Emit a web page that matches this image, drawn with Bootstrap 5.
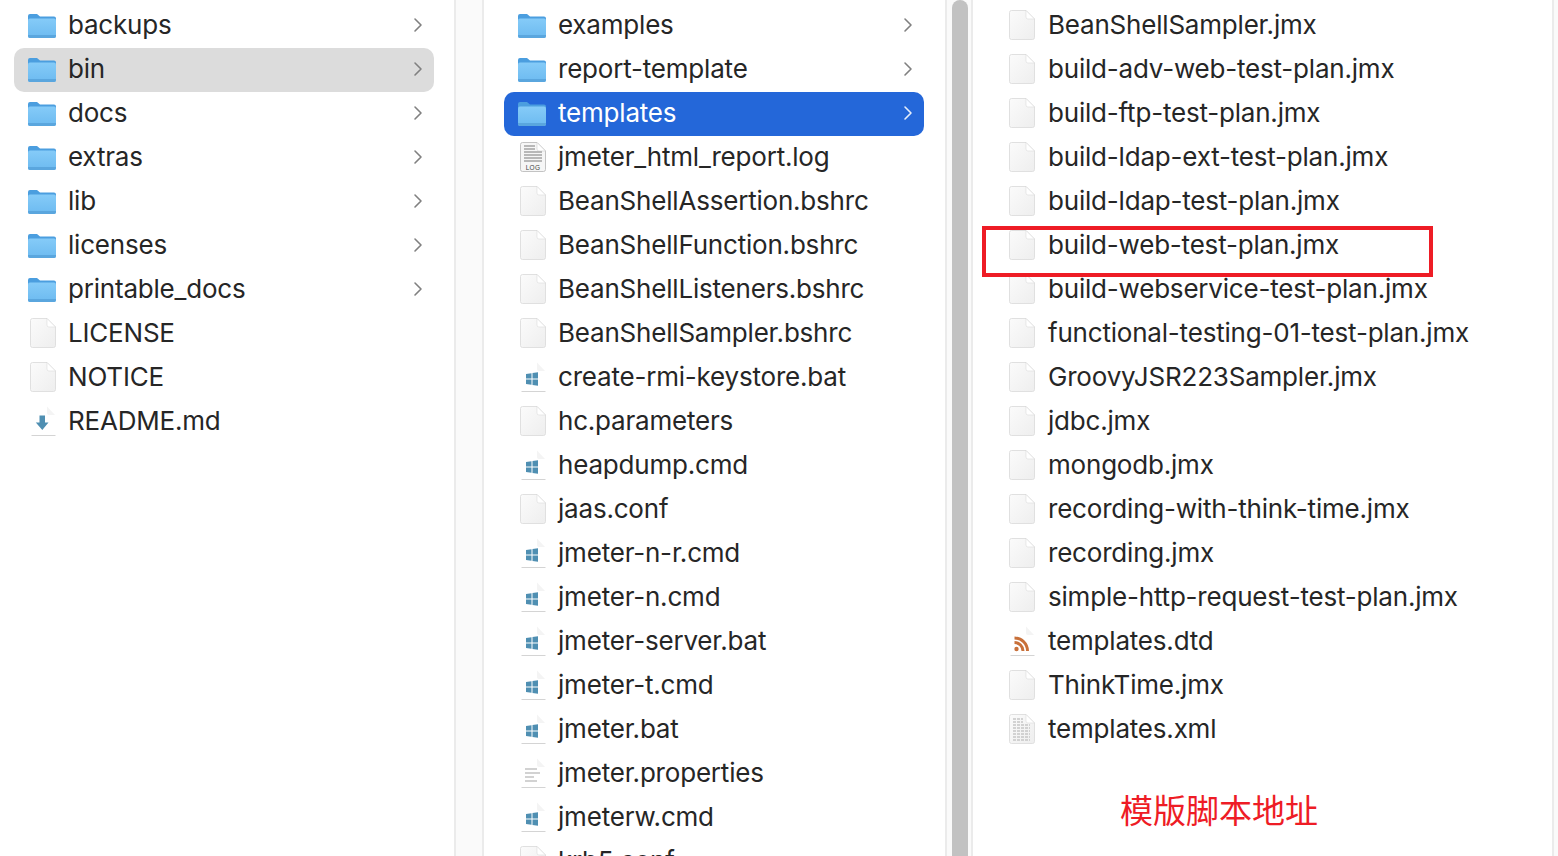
<!DOCTYPE html>
<html lang="zh-CN">
<head>
    <meta charset="UTF-8">
    <meta name="viewport" content="width=device-width, initial-scale=1.0">
    <title>JMeter templates</title>
    <link href="https://cdn.jsdelivr.net/npm/bootstrap@5.3.0/dist/css/bootstrap.min.css" rel="stylesheet">
    <style>
        body {
            background-color: #fff;
            font-family: "Inter", "Liberation Sans", sans-serif;
            font-size: 26px;
            color: #262626;
            height: 856px;
            overflow: hidden;
        }
        .finder { height: 856px; }
        .pane { padding: 4px 21px 0 20px; overflow: hidden; flex: none; }
        .pane-one { width: 454px; padding-left: 14px; padding-right: 20px; }
        .pane-two { width: 461px; }
        .pane-three { width: 579px; }
        .pane-three .file-icon { margin-right: 13px; }
        .gutter { flex: none; background: #fafafa; border-left: 2px solid #ebebeb; border-right: 2px solid #ebebeb; }
        .gutter-plain { width: 30px; }
        .gutter-scroll { width: 28px; padding: 0 3px 0 5px; }
        .gutter-end { width: 6px; border-right: 0; }
        .scroll-thumb { height: 100%; background: #c2c2c2; border-radius: 8px 8px 0 0; }
        .file-row { height: 44px; border-radius: 10px; padding: 0 11px 2px 16px; white-space: nowrap; line-height: 42px; letter-spacing: -.2px; }
        .file-row.is-gray { background: #dcdcdc; }
        .file-row.is-blue { background: #2467d9; color: #fff; }
        .file-icon { width: 26px; height: 30px; flex: none; margin-right: 12px; }
        .folder-icon { width: 30px; height: 28px; flex: none; margin-right: 11px; margin-left: -3px; }
        .chevron { width: 10px; height: 16px; flex: none; margin-left: auto; fill: none; stroke: #808080; stroke-width: 1.6; stroke-linecap: round; stroke-linejoin: round; }
        .is-blue .chevron { stroke: #e6eefb; }
        .hit-box { position: absolute; left: 982px; top: 226px; width: 451px; height: 51px; border: 4px solid #ee1c25; }
        .hit-note { position: absolute; left: 1120px; top: 787px; font-family: "Noto Sans CJK SC", sans-serif; font-size: 33px; line-height: 44px; font-weight: 400; color: #ee1c25; }
        .sprite { position: absolute; width: 0; height: 0; }
    </style>
</head>
<body>
    <svg class="sprite" aria-hidden="true">
        <defs>
            <linearGradient id="folderFill" x1="0" y1="0" x2="0" y2="1">
                <stop offset="0" stop-color="#85cbf8"/>
                <stop offset="1" stop-color="#6cbaf0"/>
            </linearGradient>
            <linearGradient id="pageFill" x1="0" y1="0" x2="1" y2="1">
                <stop offset="0" stop-color="#fbfbfb"/>
                <stop offset="1" stop-color="#eeeeee"/>
            </linearGradient>
            <symbol id="folder" viewBox="0 0 30 28">
                <path d="M1 5a2 2 0 0 1 2-2h7l3 2.500h14a2 2 0 0 1 2 2V12H1z" fill="#4b9edf"/>
                <rect x="1" y="7.500" width="28" height="19.500" rx="2" fill="url(#folderFill)"/>
                <path d="M1 24h28v1a2 2 0 0 1-2 2H3a2 2 0 0 1-2-2z" fill="#5aa6de"/>
            </symbol>
            <symbol id="page" viewBox="0 0 26 30">
                <path d="M2.500 .5h14.500l8.500 8.500v18.500a2 2 0 0 1-2 2h-21a2 2 0 0 1-2-2v-25a2 2 0 0 1 2-2z" fill="url(#pageFill)" stroke="#dcdcdc" stroke-width=".9"/>
                <path d="M17 .5v6.500a2 2 0 0 0 2 2h6.500z" fill="#fff" stroke="#dcdcdc" stroke-width=".6"/>
            </symbol>
            <symbol id="sheet" viewBox="0 0 26 30">
                <path d="M2 .5h15l8 8.500v20H2z" fill="#fff"/>
                <path d="M17 .5v6.500a2 2 0 0 0 2 2h6z" fill="#f4f4f4"/>
                <path d="M1.500 29.500h24" stroke="#d4d4d4" stroke-width="1"/>
            </symbol>
            <symbol id="win" viewBox="0 0 26 30">
                <use href="#sheet"/>
                <path d="M6 12l5.500-.8V16.500H6zM12.500 11l5.500-.8v6.300h-5.500zM6 17.500h5.500v5.300L6 22zM12.500 17.500H18v6.300l-5.500-.8z" fill="#4f8fb2"/>
            </symbol>
            <symbol id="down" viewBox="0 0 26 30">
                <use href="#sheet"/>
                <path d="M9.500 9.500H15v7h3.500l-6.200 7.500-6.500-7.500h3.700z" fill="#4f8fb2"/>
            </symbol>
            <symbol id="rss" viewBox="0 0 26 30">
                <use href="#sheet"/>
                <circle cx="7.500" cy="23" r="2.200" fill="#c8703a"/>
                <path d="M5.500 16.500a8.500 8.500 0 0 1 8.500 8.500M5.500 12a13 13 0 0 1 13 13" fill="none" stroke="#c8703a" stroke-width="3"/>
            </symbol>
            <symbol id="props" viewBox="0 0 26 30">
                <use href="#sheet"/>
                <path d="M5 11h12M5 15h15M5 19h9M5 23h12" stroke="#c4c4c4" stroke-width="1.500"/>
            </symbol>
            <symbol id="xml" viewBox="0 0 26 30">
                <use href="#page"/>
                <path d="M4 5h10M4 8h10M4 11h17M4 14h17M4 17h17M4 20h17M4 23h17M4 26h17" stroke="#c6c6c6" stroke-width="1.300" stroke-dasharray="3 1"/>
            </symbol>
            <symbol id="log" viewBox="0 0 26 30">
                <path d="M2.500 .5h14.500l8.500 8.500v18.500a2 2 0 0 1-2 2h-21a2 2 0 0 1-2-2v-25a2 2 0 0 1 2-2z" fill="#f6f6f6" stroke="#bcbcbc" stroke-width=".9"/>
                <path d="M17 .5v6.500a2 2 0 0 0 2 2h6.500z" fill="#fff" stroke="#cfcfcf" stroke-width=".6"/>
                <path d="M4 4h11M4 7h11M4 10h18M4 13h18M4 16h18M4 19h18" stroke="#b8b8b8" stroke-width="2"/>
                <text x="13" y="27.500" text-anchor="middle" font-family="Liberation Sans, sans-serif" font-size="6.500" letter-spacing=".3" fill="#444">LOG</text>
            </symbol>
            <symbol id="chev" viewBox="0 0 10 16">
                <path d="M2 2l6 6-6 6"/>
            </symbol>
        </defs>
    </svg>

    <div class="finder d-flex">
        <div class="pane pane-one">
            <div class="file-row d-flex align-items-center"><svg class="folder-icon"><use href="#folder"/></svg>backups<svg class="chevron"><use href="#chev"/></svg></div>
            <div class="file-row is-gray d-flex align-items-center"><svg class="folder-icon"><use href="#folder"/></svg>bin<svg class="chevron"><use href="#chev"/></svg></div>
            <div class="file-row d-flex align-items-center"><svg class="folder-icon"><use href="#folder"/></svg>docs<svg class="chevron"><use href="#chev"/></svg></div>
            <div class="file-row d-flex align-items-center"><svg class="folder-icon"><use href="#folder"/></svg>extras<svg class="chevron"><use href="#chev"/></svg></div>
            <div class="file-row d-flex align-items-center"><svg class="folder-icon"><use href="#folder"/></svg>lib<svg class="chevron"><use href="#chev"/></svg></div>
            <div class="file-row d-flex align-items-center"><svg class="folder-icon"><use href="#folder"/></svg>licenses<svg class="chevron"><use href="#chev"/></svg></div>
            <div class="file-row d-flex align-items-center"><svg class="folder-icon"><use href="#folder"/></svg>printable_docs<svg class="chevron"><use href="#chev"/></svg></div>
            <div class="file-row d-flex align-items-center"><svg class="file-icon"><use href="#page"/></svg>LICENSE</div>
            <div class="file-row d-flex align-items-center"><svg class="file-icon"><use href="#page"/></svg>NOTICE</div>
            <div class="file-row d-flex align-items-center"><svg class="file-icon"><use href="#down"/></svg>README.md</div>
        </div>
        <div class="gutter gutter-plain"></div>
        <div class="pane pane-two">
            <div class="file-row d-flex align-items-center"><svg class="folder-icon"><use href="#folder"/></svg>examples<svg class="chevron"><use href="#chev"/></svg></div>
            <div class="file-row d-flex align-items-center"><svg class="folder-icon"><use href="#folder"/></svg>report-template<svg class="chevron"><use href="#chev"/></svg></div>
            <div class="file-row is-blue d-flex align-items-center"><svg class="folder-icon"><use href="#folder"/></svg>templates<svg class="chevron"><use href="#chev"/></svg></div>
            <div class="file-row d-flex align-items-center"><svg class="file-icon"><use href="#log"/></svg>jmeter_html_report.log</div>
            <div class="file-row d-flex align-items-center"><svg class="file-icon"><use href="#page"/></svg>BeanShellAssertion.bshrc</div>
            <div class="file-row d-flex align-items-center"><svg class="file-icon"><use href="#page"/></svg>BeanShellFunction.bshrc</div>
            <div class="file-row d-flex align-items-center"><svg class="file-icon"><use href="#page"/></svg>BeanShellListeners.bshrc</div>
            <div class="file-row d-flex align-items-center"><svg class="file-icon"><use href="#page"/></svg>BeanShellSampler.bshrc</div>
            <div class="file-row d-flex align-items-center"><svg class="file-icon"><use href="#win"/></svg>create-rmi-keystore.bat</div>
            <div class="file-row d-flex align-items-center"><svg class="file-icon"><use href="#page"/></svg>hc.parameters</div>
            <div class="file-row d-flex align-items-center"><svg class="file-icon"><use href="#win"/></svg>heapdump.cmd</div>
            <div class="file-row d-flex align-items-center"><svg class="file-icon"><use href="#page"/></svg>jaas.conf</div>
            <div class="file-row d-flex align-items-center"><svg class="file-icon"><use href="#win"/></svg>jmeter-n-r.cmd</div>
            <div class="file-row d-flex align-items-center"><svg class="file-icon"><use href="#win"/></svg>jmeter-n.cmd</div>
            <div class="file-row d-flex align-items-center"><svg class="file-icon"><use href="#win"/></svg>jmeter-server.bat</div>
            <div class="file-row d-flex align-items-center"><svg class="file-icon"><use href="#win"/></svg>jmeter-t.cmd</div>
            <div class="file-row d-flex align-items-center"><svg class="file-icon"><use href="#win"/></svg>jmeter.bat</div>
            <div class="file-row d-flex align-items-center"><svg class="file-icon"><use href="#props"/></svg>jmeter.properties</div>
            <div class="file-row d-flex align-items-center"><svg class="file-icon"><use href="#win"/></svg>jmeterw.cmd</div>
            <div class="file-row d-flex align-items-center"><svg class="file-icon"><use href="#page"/></svg>krb5.conf</div>
        </div>
        <div class="gutter gutter-scroll"><div class="scroll-thumb"></div></div>
        <div class="pane pane-three">
            <div class="file-row d-flex align-items-center"><svg class="file-icon"><use href="#page"/></svg>BeanShellSampler.jmx</div>
            <div class="file-row d-flex align-items-center"><svg class="file-icon"><use href="#page"/></svg>build-adv-web-test-plan.jmx</div>
            <div class="file-row d-flex align-items-center"><svg class="file-icon"><use href="#page"/></svg>build-ftp-test-plan.jmx</div>
            <div class="file-row d-flex align-items-center"><svg class="file-icon"><use href="#page"/></svg>build-ldap-ext-test-plan.jmx</div>
            <div class="file-row d-flex align-items-center"><svg class="file-icon"><use href="#page"/></svg>build-ldap-test-plan.jmx</div>
            <div class="file-row d-flex align-items-center"><svg class="file-icon"><use href="#page"/></svg>build-web-test-plan.jmx</div>
            <div class="file-row d-flex align-items-center"><svg class="file-icon"><use href="#page"/></svg>build-webservice-test-plan.jmx</div>
            <div class="file-row d-flex align-items-center"><svg class="file-icon"><use href="#page"/></svg>functional-testing-01-test-plan.jmx</div>
            <div class="file-row d-flex align-items-center"><svg class="file-icon"><use href="#page"/></svg>GroovyJSR223Sampler.jmx</div>
            <div class="file-row d-flex align-items-center"><svg class="file-icon"><use href="#page"/></svg>jdbc.jmx</div>
            <div class="file-row d-flex align-items-center"><svg class="file-icon"><use href="#page"/></svg>mongodb.jmx</div>
            <div class="file-row d-flex align-items-center"><svg class="file-icon"><use href="#page"/></svg>recording-with-think-time.jmx</div>
            <div class="file-row d-flex align-items-center"><svg class="file-icon"><use href="#page"/></svg>recording.jmx</div>
            <div class="file-row d-flex align-items-center"><svg class="file-icon"><use href="#page"/></svg>simple-http-request-test-plan.jmx</div>
            <div class="file-row d-flex align-items-center"><svg class="file-icon"><use href="#rss"/></svg>templates.dtd</div>
            <div class="file-row d-flex align-items-center"><svg class="file-icon"><use href="#page"/></svg>ThinkTime.jmx</div>
            <div class="file-row d-flex align-items-center"><svg class="file-icon"><use href="#xml"/></svg>templates.xml</div>
        </div>
        <div class="gutter gutter-end"></div>
    </div>

    <div class="hit-box"></div>
    <div class="hit-note">模版脚本地址</div>

    <script src="https://cdn.jsdelivr.net/npm/bootstrap@5.3.0/dist/js/bootstrap.bundle.min.js"></script>
</body>
</html>
